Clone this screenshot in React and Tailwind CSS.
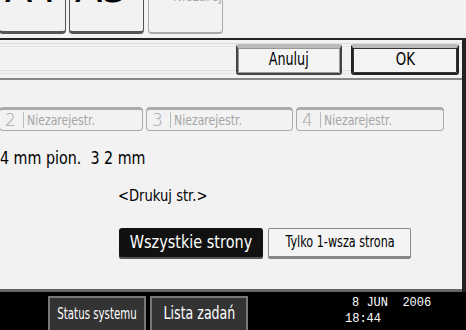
import React from 'react';

const font = { fontFamily: '"DejaVu Sans", sans-serif' };

const TopButton = ({ label, disabled }) => (
  <div
    className={`h-[34px] overflow-hidden rounded-b-sm border border-t-0 bg-[#f2f2f2] ${
      disabled ? 'border-[#aaa] border-b-2' : 'border-[#555] border-b-[3px]'
    }`}
  >
    {disabled ? (
      <div className="-mt-[12px] px-6 text-[12px] text-[#aaa]">Niezarej.</div>
    ) : (
      <div className="-mt-[32px] px-[5px] text-[40px] leading-[40px] text-black">{label}</div>
    )}
  </div>
);

const Narrow = ({ children, k = 'scale-x-[0.82]' }) => (
  <span className={`inline-block shrink-0 whitespace-nowrap ${k}`}>{children}</span>
);

const Field = ({ num, w }) => (
  <div className={`flex h-[24px] items-center rounded-sm border border-[#aaa] border-t-[3px] bg-[#f2f2f2] text-[#a5a5a5] ${w}`}>
    <span className="w-[22px] pl-[5px] text-[17px] font-light leading-none">{num}</span>
    <span className="ml-[1px] mr-[3px] h-[16px] border-l border-[#bbb]" />
    <Narrow k="scale-x-[0.78] origin-left text-[14px]">Niezarejestr.</Narrow>
  </div>
);

const btnBase = 'flex items-center justify-center overflow-visible';

const App = () => {
  return (
    <div className="flex h-[330px] w-[466px] flex-col overflow-hidden bg-[#f2f2f2]" style={font}>
      {/* top size buttons */}
      <div className="flex h-[38px]">
        <div className="-ml-px w-[67px]">
          <TopButton label="A4" />
        </div>
        <div className="ml-[3px] w-[75px]">
          <TopButton label="A3" />
        </div>
        <div className="ml-[4px] w-[75px]">
          <TopButton disabled />
        </div>
      </div>

      <div className="flex flex-1 flex-col border-r-4 border-[#222]">
        {/* header bar */}
        <div className="relative flex h-[40px] items-center justify-end gap-[9px] border-t-2 border-[#222] bg-[#f2f2f2] pr-[3px]">
          <div className="absolute inset-x-0 top-[3px] h-px bg-[#dcdcdc]" />
          <div className="absolute inset-x-0 top-[6px] h-px bg-[#e4e4e4]" />
          <div className="absolute inset-x-0 bottom-[7px] h-px bg-[#dcdcdc]" />
          <div className="absolute inset-x-0 bottom-[4px] h-px bg-[#e4e4e4]" />
          <button className={`${btnBase} relative z-10 h-[31px] w-[106px] rounded-[3px] border-2 border-[#444] border-t-[4px] border-t-[#bbb] bg-[#f4f4f4] text-[17px] text-black shadow-[inset_0_0_0_1px_#999]`}>
            <Narrow k="scale-x-[0.75]">Anuluj</Narrow>
          </button>
          <button className={`${btnBase} relative z-10 h-[31px] w-[108px] rounded-[3px] border-2 border-[#222] border-t-[4px] border-t-[#bbb] bg-[#f4f4f4] text-[17px] text-black shadow-[inset_0_0_0_1px_#333]`}>
            <Narrow k="scale-x-[0.78]">OK</Narrow>
          </button>
        </div>
        <div className="h-[2px] bg-[#888]" />

        {/* content */}
        <div className="flex flex-1 flex-col">
          <div className="-ml-px mt-[27px] flex gap-[3px]">
            <Field num="2" w="w-[144px]" />
            <Field num="3" w="w-[147px]" />
            <Field num="4" w="w-[148px]" />
          </div>
          <div className="mt-[15px] text-[17px] text-black">
            <Narrow k="scale-x-[0.84] origin-left">4 mm pion.&nbsp; 3 2 mm</Narrow>
          </div>
          <div className="mt-[12px] pl-[118px] text-[16px] text-black">
            <Narrow k="scale-x-[0.82] origin-left">&lt;Drukuj str.&gt;</Narrow>
          </div>
          <div className="mt-[20px] flex gap-[5px] pl-[119px]">
            <button className={`${btnBase} h-[31px] w-[144px] rounded-[3px] bg-[#111] text-[17px] text-white shadow-[inset_0_-2px_0_#555]`}>
              <Narrow k="scale-x-[0.85]">Wszystkie strony</Narrow>
            </button>
            <button className={`${btnBase} h-[31px] w-[143px] rounded-[2px] border border-[#888] border-b-[3px] bg-[#f4f4f4] text-[16px] text-black`}>
              <Narrow k="scale-x-[0.7]">Tylko 1-wsza strona</Narrow>
            </button>
          </div>
        </div>
        <div className="h-[3px] bg-[#666]" />
      </div>

      {/* bottom status bar */}
      <div className="flex h-[38px] items-end bg-black">
        <div className="ml-[48px] flex gap-[4px]">
          <button className={`${btnBase} h-[34px] w-[98px] border-2 border-[#777] border-b-0 bg-[#333] text-[16px] text-white`}>
            <Narrow k="scale-x-[0.64]">Status systemu</Narrow>
          </button>
          <button className={`${btnBase} h-[34px] w-[98px] border-2 border-[#777] border-b-0 bg-[#333] text-[17px] text-white`}>
            <Narrow k="scale-x-[0.74]">Lista zadań</Narrow>
          </button>
        </div>
        <div className="mb-[3px] ml-[97px] flex flex-col font-mono text-[12px] leading-[16px] text-white">
          <span className="pl-[7px]">8 JUN&nbsp;&nbsp;2006</span>
          <span>18:44</span>
        </div>
      </div>
    </div>
  );
};

export default App;
